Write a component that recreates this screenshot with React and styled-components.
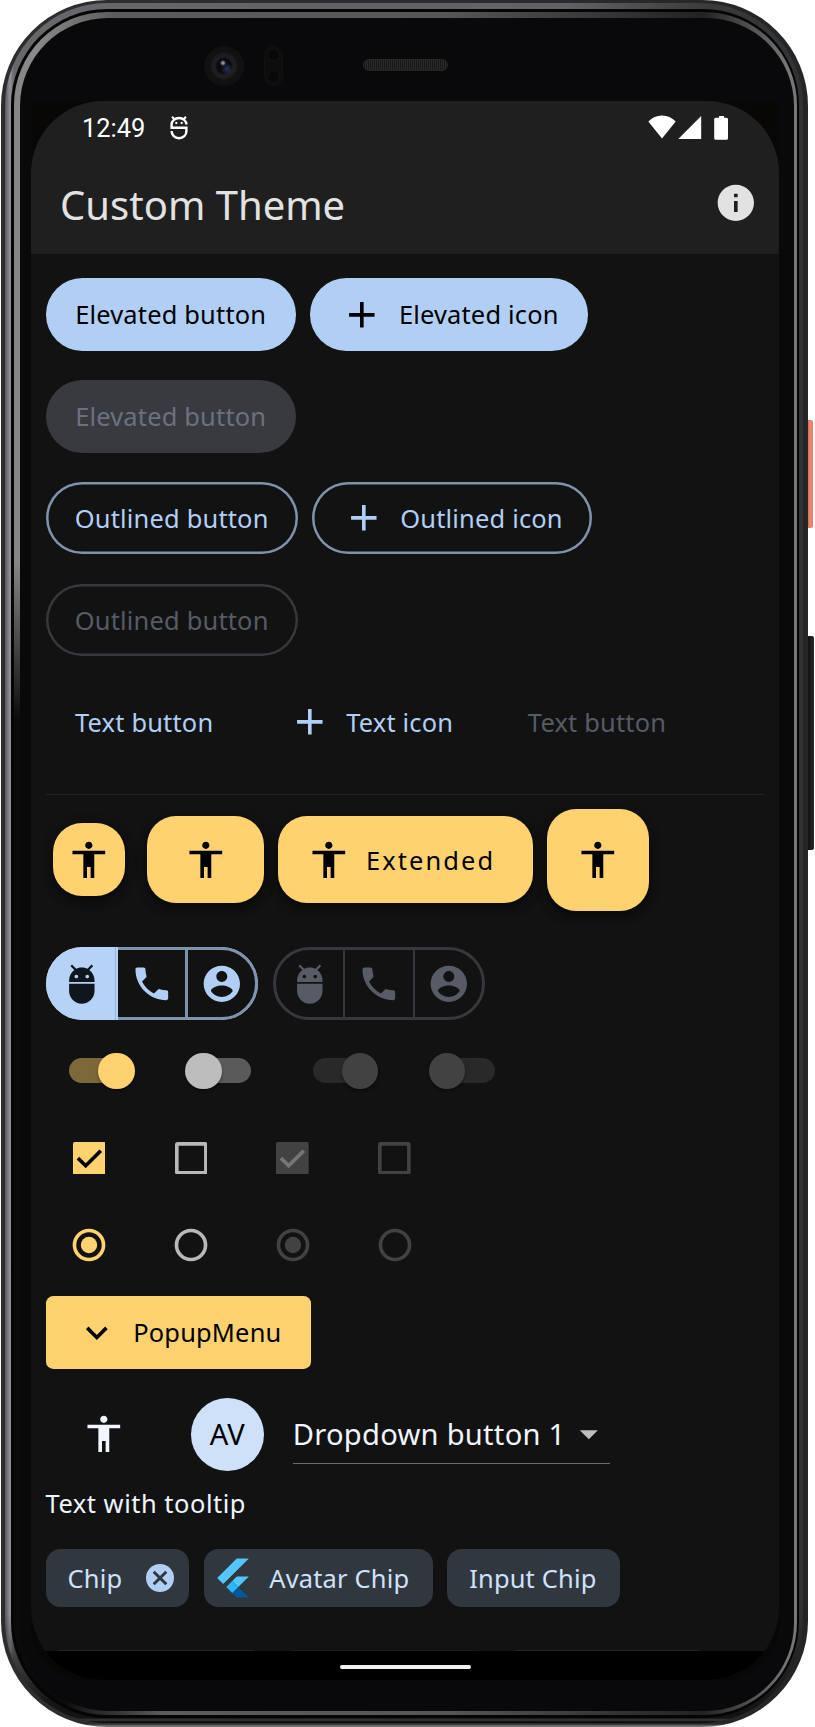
import React from "react";
import styled, { createGlobalStyle, css } from "styled-components";

const dp = (n) => `${(n * 1.8182).toFixed(2)}px`;

const color = {
  primary: "#b1cff5",
  primaryOutline: "#7f93ad",
  accent: "#ffd270",
  surface: "#121212",
  bar: "#1f1f1f",
  chip: "#30373f",
  chipText: "#d0e1fb",
  onSurface: "#f0f5fe",
  disabledFill: "#383a3f",
  disabledText: "#565b66",
  disabledLine: "#36383d",
};

const GlobalStyle = createGlobalStyle`
  *, *::before, *::after { box-sizing: border-box; }
  html, body { margin: 0; padding: 0; background: #ffffff; }
  body {
    font-family: "Noto Sans", sans-serif;
    overflow: hidden;
    font-kerning: normal;
  }
  button { font: inherit; border: 0; margin: 0; background: none; }
  svg { display: block; flex: none; }
`;

/* ---------- device shell ---------- */

const Page = styled.div`
  position: relative;
  width: 815px;
  height: 1727px;
  padding: 0 7px 0 1px;
  overflow: hidden;
`;

const SideKey = styled.span`
  position: absolute;
  left: 807px;
  width: ${(p) => p.$width}px;
  top: ${(p) => p.$top}px;
  height: ${(p) => p.$height}px;
  border-radius: 0 2px 2px 0;
  background: ${(p) => p.$fill};
`;

const Shell = styled.div`
  position: relative;
  height: 100%;
  padding: 3px 5px 4px 4px;
  border-radius: 106px;
  background:
    linear-gradient(180deg, transparent 1724px, #777 1726px),
    linear-gradient(90deg, #2c2e2e 0 50%, #232526);
`;

const MetalRim = styled.div`
  height: 100%;
  padding: 6px 4px 5px 6px;
  border-radius: 102px;
  background:
    linear-gradient(180deg, transparent 1610px, #151515 1700px, #131313 1715px, #3a3a3a 1717px, #0c0c0c 1719px),
    linear-gradient(90deg, #55575a 0, #929398 5px, #67686b 9px, #606367 40%, #606367 70%, #393b3d 88%, #303235 100%);
`;

const BlackRim = styled.div`
  height: 100%;
  padding: 3px 2px 3px 3px;
  border-radius: 96px;
  background: #050505;
`;

const InnerRim = styled.div`
  height: 100%;
  padding: 6px 3px 4px 6px;
  border-radius: 93px;
  background:
    linear-gradient(90deg, #0b0a0b 50px, transparent 150px) 0 100% / 200px 100px no-repeat,
    linear-gradient(180deg, transparent 550px, #0b0a0b 710px) 0 0 / 50px 100% no-repeat,
    linear-gradient(90deg, #858585 0, #8a8a8a 20px, #5c5c5c 100px, #565656 55%, #222 88%, #777 99%);
`;

const Glass = styled.div`
  position: relative;
  height: 100%;
  padding: 83px 15px 31px 11px;
  border-radius: 88px;
  background: #09090b;
`;

const ScreenWell = styled.div`
  height: 100%;
  border-radius: 0 0 56px 56px;
  background: #080705;
`;

const Camera = styled.span`
  position: absolute;
  left: 184px;
  top: 28px;
  width: 41px;
  height: 41px;
  border-radius: 50%;
  background:
    radial-gradient(circle at 19px 17px, #909094 0 1px, transparent 3px),
    radial-gradient(circle at 23px 23px, #27345a 0, transparent 6px),
    radial-gradient(circle at 20px 20px, #0a0b10 0 7px, #1d1e21 9px, #1d1d1d 12px, #111112 14px, #111112 19px, #0a0a0b 21px);
`;

const Sensor = styled.span`
  position: absolute;
  left: 244px;
  top: 28px;
  width: 19px;
  height: 40px;
  border-radius: 10px;
  border: 1px solid #111112;
  background:
    radial-gradient(circle at 50% 8px, #080808 0 5px, #121213 6px, transparent 7px),
    radial-gradient(circle at 50% 30px, #080808 0 5px, #121213 6px, transparent 7px),
    #0d0d0e;
`;

const Speaker = styled.span`
  position: absolute;
  left: 343px;
  top: 41px;
  width: 85px;
  height: 12px;
  border-radius: 6px;
  border: 1px solid #252525;
  background: repeating-linear-gradient(90deg, #171717 0 1px, #2a2a2a 1px 2px);
`;

/* ---------- screen ---------- */

const Screen = styled.main`
  height: 100%;
  display: flex;
  flex-direction: column;
  overflow: hidden;
  border-radius: 72px;
  background: ${color.surface};
`;

const Header = styled.header`
  flex: none;
  height: 153px;
  background: ${color.bar};
  color: #e2e2e2;
`;

const StatusBar = styled.div`
  display: flex;
  align-items: center;
  height: 53px;
  padding: 0 50px 0 51px;
  color: #fff;
  font: 400 25.4px/30px Roboto, sans-serif;
`;

const Clock = styled.span`
  width: 66px;
  margin-right: 22px;
`;

const StatusIcons = styled.div`
  display: flex;
  align-items: center;
  margin-left: auto;
`;

const AppBar = styled.div`
  display: flex;
  align-items: center;
  justify-content: space-between;
  height: 98px;
  padding: 0 ${dp(12)} 0 ${dp(16)};
`;

const Title = styled.h1`
  margin: 4px 0 0;
  font-size: 40px;
  line-height: 52px;
  font-weight: 400;
`;

const Content = styled.div`
  flex: 1;
  min-height: 0;
  overflow: hidden;
  display: flex;
  flex-direction: column;
  padding: 16.8px 14.5px 0 14.5px;
  font-size: 25.45px;
  line-height: 36px;
`;

const Row = styled.div`
  flex: none;
  display: flex;
  align-items: center;
  gap: ${dp(8)};
  height: ${(p) => dp(p.$h || 48)};
  margin-bottom: ${(p) => dp(p.$after || 0)};
`;

const variants = {
  elevated: css`
    background: ${color.primary};
    color: #000;
    &:disabled { background: ${color.disabledFill}; color: #6b7180; }
  `,
  outlined: css`
    box-shadow: inset 0 0 0 2.5px ${color.primaryOutline};
    color: ${color.primary};
    &:disabled {
      box-shadow: inset 0 0 0 2.5px ${color.disabledLine};
      color: ${color.disabledText};
    }
  `,
  text: css`
    color: ${color.primary};
    &:disabled { color: ${color.disabledText}; }
  `,
  popup: css`
    background: ${color.accent};
    color: #000;
    border-radius: ${dp(4)};
  `,
};

const Button = styled.button`
  flex: none;
  display: flex;
  align-items: center;
  justify-content: center;
  gap: 15px;
  width: ${(p) => p.$w}px;
  height: ${dp(40)};
  padding: 0;
  border-radius: ${dp(20)};
  white-space: nowrap;
  letter-spacing: 0.18px;
  ${(p) => variants[p.$variant]}
`;

const Divider = styled.hr`
  flex: none;
  width: 100%;
  height: 1px;
  margin: 28.6px 0 14px;
  border: 0;
  background: #222;
`;

const Fab = styled.button`
  flex: none;
  display: flex;
  align-items: center;
  justify-content: center;
  width: ${(p) => p.$w}px;
  height: ${(p) => dp(p.$h)};
  margin: 0 ${(p) => p.$inset || 0}px;
  padding: 0;
  border-radius: ${dp(16)};
  background: ${color.accent};
  color: #000;
  box-shadow: 0 6px 10px rgba(0, 0, 0, 0.35), 0 2px 14px rgba(0, 0, 0, 0.2);
`;

const ExtendedFab = styled(Fab)`
  justify-content: flex-start;
  gap: 15.3px;
  padding-left: 29px;
  letter-spacing: 2.1px;
`;

const ToggleGroup = styled.div`
  display: flex;
  width: 212.6px;
  height: ${dp(40)};
  overflow: hidden;
  border: 3px solid ${color.disabledLine};
  border-radius: ${dp(20)};
  color: ${(p) => (p.$disabled ? color.disabledText : color.primary)};
  ${(p) => !p.$disabled && css`
    border: 0;
    background: #b7d2f7;
  `}
`;

const ToggleCell = styled.span`
  flex: 1 1 0;
  display: flex;
  align-items: center;
  justify-content: center;
  & + & { border-left: 2px solid ${color.disabledLine}; }
`;

const ActiveCell = styled.span`
  flex: none;
  display: flex;
  align-items: center;
  justify-content: center;
  width: ${(p) => p.$w}px;
  color: ${(p) => (p.$on ? "#10161d" : color.primary)};
  background: ${(p) => (p.$on ? "#b7d2f7" : color.surface)};
  ${(p) => p.$on ? css`
    box-shadow: inset -2px 0 0 #b7d2f7, inset -3px 0 0 #9bb3d4;
  ` : css`
    border: 3px solid ${color.primaryOutline};
    border-left-width: ${p.$first ? 0 : 3}px;
    border-right-width: ${p.$last ? 3 : 0}px;
    border-radius: ${p.$last ? `0 ${dp(20)} ${dp(20)} 0` : 0};
  `}
`;

const SwitchBox = styled.span`
  display: flex;
  align-items: center;
  justify-content: center;
  width: ${dp(59)};
`;

const Track = styled.span`
  display: flex;
  align-items: center;
  justify-content: ${(p) => (p.$on ? "flex-end" : "flex-start")};
  width: ${dp(33)};
  height: ${dp(14)};
  border-radius: ${dp(7)};
  background: ${(p) => p.$track};
`;

const Thumb = styled.span`
  flex: none;
  width: ${dp(20)};
  height: ${dp(20)};
  margin: 0 -5.5px;
  border-radius: 50%;
  background: ${(p) => p.$fill};
  box-shadow: 0 2px 3px rgba(0, 0, 0, 0.35);
`;

const Cell = styled.span`
  display: flex;
  align-items: center;
  justify-content: center;
  width: ${(p) => dp(p.$w || 48)};
  color: ${color.onSurface};
`;

const Avatar = styled.span`
  display: flex;
  align-items: center;
  justify-content: center;
  width: ${dp(40)};
  height: ${dp(40)};
  margin: 0 ${dp(8)};
  border-radius: 50%;
  background: #cfe0f9;
  color: #000;
  font-size: 29.1px;
`;

const Dropdown = styled.div`
  display: flex;
  align-items: center;
  width: 317.5px;
  height: 59px;
  border-bottom: 1px solid #6c6c6c;
  color: ${color.onSurface};
  font-size: 29.1px;
  letter-spacing: 0.27px;
  white-space: nowrap;
  & > svg { margin-left: auto; color: #bdbdbd; }
`;

const TooltipText = styled.p`
  flex: none;
  height: ${dp(39)};
  margin: 0;
  padding-top: 7px;
  color: ${color.onSurface};
  letter-spacing: 0.53px;
`;

const Chip = styled.span`
  flex: none;
  display: flex;
  align-items: center;
  width: ${(p) => p.$w}px;
  height: ${dp(32)};
  padding-left: ${(p) => p.$pad ?? 22}px;
  border-radius: ${dp(8)};
  background: ${color.chip};
  color: ${color.chipText};
  letter-spacing: 0.18px;
  white-space: nowrap;
`;

const ChipDelete = styled.span`
  display: flex;
  margin-left: auto;
  margin-right: 15.4px;
`;

const ChipLogo = styled.span`
  display: flex;
  width: 52.6px;
`;

const PeekRow = styled.div`
  flex: none;
  display: flex;
  height: 1px;
  margin-top: auto;
  padding-left: 12px;
  gap: 37px;
`;

const PeekEdge = styled.span`
  width: ${(p) => p.$w}px;
  background: ${(p) => p.$fill};
`;

const NavBar = styled.footer`
  flex: none;
  display: flex;
  justify-content: center;
  height: 29px;
  padding-top: 14px;
  background: #000;
`;

const HomePill = styled.span`
  width: 131px;
  height: 4px;
  border-radius: 2px;
  background: #f2f2f2;
`;

/* ---------- icons ---------- */

const paths = {
  add: "M19 13h-6v6h-2v-6H5v-2h6V5h2v6h6v2z",
  person: "M12 2c1.1 0 2 .9 2 2s-.9 2-2 2-2-.9-2-2 .9-2 2-2zm9 7h-6v13h-2v-6h-2v6H9V9H3V7h18v2z",
  adb: "M5 16c0 3.87 3.13 7 7 7s7-3.13 7-7v-4H5v4zM16.12 4.37l2.1-2.1-.82-.83-2.3 2.31C14.16 3.28 13.12 3 12 3s-2.16.28-3.09.75L6.6 1.44l-.82.83 2.1 2.1C6.14 5.64 5 7.68 5 10v1h14v-1c0-2.32-1.14-4.36-2.88-5.63zM9 9c-.55 0-1-.45-1-1s.45-1 1-1 1 .45 1 1-.45 1-1 1zm6 0c-.55 0-1-.45-1-1s.45-1 1-1 1 .45 1 1-.45 1-1 1z",
  phone: "M6.62 10.79c1.44 2.83 3.76 5.14 6.59 6.59l2.2-2.2c.27-.27.67-.36 1.02-.24 1.12.37 2.33.57 3.57.57.55 0 1 .45 1 1V20c0 .55-.45 1-1 1-9.39 0-17-7.61-17-17 0-.55.45-1 1-1h3.5c.55 0 1 .45 1 1 0 1.25.2 2.45.57 3.57.11.35.03.74-.25 1.02l-2.2 2.2z",
  account: "M12 2C6.48 2 2 6.48 2 12s4.48 10 10 10 10-4.48 10-10S17.52 2 12 2zm0 3c1.66 0 3 1.34 3 3s-1.34 3-3 3-3-1.34-3-3 1.34-3 3-3zm0 14.2c-2.5 0-4.71-1.28-6-3.22.03-1.99 4-3.08 6-3.08 1.99 0 5.97 1.09 6 3.08-1.29 1.94-3.5 3.22-6 3.22z",
  info: "M12 2C6.48 2 2 6.48 2 12s4.48 10 10 10 10-4.48 10-10S17.52 2 12 2zm1 15h-2v-6h2v6zm0-8h-2V7h2v2z",
  expand: "M16.59 8.59L12 13.17 7.41 8.59 6 10l6 6 6-6z",
  drop: "M7 10l5 5 5-5z",
};

const Icon = ({ name, size = 43.64 }) => (
  <svg width={size} height={size} viewBox="0 0 24 24" fill="currentColor">
    <path d={paths[name]} />
  </svg>
);

const DebugIcon = () => (
  <svg width="18" height="24" viewBox="0 0 18 24" fill="none" stroke="#fff" strokeWidth="2.4">
    <path d="M2 .8l2.4 2.4M16 .8l-2.4 2.4" strokeWidth="2" />
    <path d="M16.4 8.6C16.4 4.6 13 2 9 2S1.6 4.6 1.6 8.6v3.2h14.8v3.4c0 4-3.2 7-7.4 7s-7.4-3-7.400-7.200" />
    <circle cx="6.3" cy="7" r="1.15" fill="#fff" stroke="none" />
    <circle cx="11.7" cy="7" r="1.15" fill="#fff" stroke="none" />
  </svg>
);

const SignalIcons = () => (
  <svg width="81" height="25" viewBox="0 0 81 25" fill="#fff">
    <path d="M.3 6.5C4 2.8 8.7 .6 14 .6s10 2.2 13.7 5.9L14 23.5z" />
    <path d="M53.2 1v23H30.3z" />
    <path d="M71 1h5v1.700h2.500q1.500 0 1.500 1.500v19q0 1.500-1.500 1.500h-10.800q-1.500 0-1.500-1.500v-19q0-1.500 1.500-1.500h3.300z" />
  </svg>
);

const CheckIcon = ({ on, fill, mark }) => (
  <svg width="32.7" height="32.7" viewBox="0 0 18 18" fill="none">
    {on ? (
      <>
        <rect width="18" height="18" rx="1" fill={fill} />
        <path d="M2.7 8.9l4.3 4.2 8.3-8.3" stroke={mark} strokeWidth="2" />
      </>
    ) : (
      <rect x="1" y="1" width="16" height="16" rx=".5" stroke={fill} strokeWidth="2" />
    )}
  </svg>
);

const RadioIcon = ({ on, fill }) => (
  <svg width="34" height="34" viewBox="0 0 18.7 18.7" fill="none">
    <circle cx="9.35" cy="9.35" r="8" stroke={fill} strokeWidth="2" />
    {on && <circle cx="9.35" cy="9.35" r="4.5" fill={fill} />}
  </svg>
);

const DeleteIcon = () => (
  <svg width="28" height="28" viewBox="2 2 20 20">
    <circle cx="12" cy="12" r="10" fill={color.primary} />
    <path d="M7.5 7.5l9 9M16.5 7.5l-9 9" stroke={color.chip} strokeWidth="2.1" />
  </svg>
);

const FlutterIcon = () => (
  <svg width="32" height="40" viewBox="9 10 148 182">
    <path fill="#54c5f8" d="M37.7 128.9L9.8 101 100.4 10.4h55.8M156.2 94h-55.8L79.5 114.9l27.9 27.9" />
    <path fill="#01579b" d="M79.5 170.7l20.900 20.900h55.800l-48.800-48.800" />
    <path fill="#29b6f6" d="M51.7 142.8l27.800-27.900 27.900 27.900-27.900 27.900z" />
  </svg>
);

/* ---------- controls ---------- */

const Switch = ({ on, track, thumb }) => (
  <SwitchBox>
    <Track $on={on} $track={track}>
      <Thumb $fill={thumb} />
    </Track>
  </SwitchBox>
);

const selectionStates = [
  { on: true, fill: color.accent, mark: "#000" },
  { on: false, fill: "#b8b8b8" },
  { on: true, fill: "#424242", mark: "#767676" },
  { on: false, fill: "#424242" },
];

const switchStates = [
  { on: true, track: "#7d683a", thumb: color.accent },
  { on: false, track: "#5a5a5a", thumb: "#bdbdbd" },
  { on: true, track: "#292929", thumb: "#424242" },
  { on: false, track: "#292929", thumb: "#424242" },
];

export default function App() {
  return (
    <>
      <GlobalStyle />
      <Page>
        <SideKey $top={420} $height={108} $width={6} $fill="linear-gradient(90deg, #c95f47, #ee8970 50%, #e97d65)" />
        <SideKey $top={636} $height={214} $width={7} $fill="linear-gradient(90deg, #0b0c0c, #2b2b29)" />
        <Shell>
          <MetalRim>
            <BlackRim>
              <InnerRim>
                <Glass>
                  <Camera />
                  <Sensor />
                  <Speaker />
                  <ScreenWell>
                    <Screen>
                      <Header>
                        <StatusBar>
                          <Clock>12:49</Clock>
                          <DebugIcon />
                          <StatusIcons>
                            <SignalIcons />
                          </StatusIcons>
                        </StatusBar>
                        <AppBar>
                          <Title>Custom Theme</Title>
                          <Icon name="info" />
                        </AppBar>
                      </Header>

                      <Content>
                        <Row $after={8}>
                          <Button $variant="elevated" $w={250.4}>Elevated button</Button>
                          <Button $variant="elevated" $w={278}><Icon name="add" />Elevated icon</Button>
                        </Row>
                        <Row $after={8}>
                          <Button $variant="elevated" $w={250.4} disabled>Elevated button</Button>
                        </Row>
                        <Row $after={8}>
                          <Button $variant="outlined" $w={252.4}>Outlined button</Button>
                          <Button $variant="outlined" $w={279.6}><Icon name="add" />Outlined icon</Button>
                        </Row>
                        <Row $after={8}>
                          <Button $variant="outlined" $w={252.4} disabled>Outlined button</Button>
                        </Row>
                        <Row>
                          <Button $variant="text" $w={197.4}>Text button</Button>
                          <Button $variant="text" $w={226}><Icon name="add" />Text icon</Button>
                          <Button $variant="text" $w={198} disabled>Text button</Button>
                        </Row>

                        <Divider />

                        <Row $h={56} $after={16}>
                          <Fab $w={72.7} $h={40} $inset={7.3}><Icon name="person" /></Fab>
                          <Fab $w={116.2} $h={48}><Icon name="person" /></Fab>
                          <ExtendedFab $w={254.6} $h={48}><Icon name="person" />Extended</ExtendedFab>
                          <Fab $w={101.8} $h={56}><Icon name="person" /></Fab>
                        </Row>

                        <Row>
                          <ToggleGroup>
                            <ActiveCell $on $w={72.3}><Icon name="adb" /></ActiveCell>
                            <ActiveCell $first $w={67.4}><Icon name="phone" /></ActiveCell>
                            <ActiveCell $last $w={72.9}><Icon name="account" /></ActiveCell>
                          </ToggleGroup>
                          <ToggleGroup $disabled>
                            <ToggleCell><Icon name="adb" /></ToggleCell>
                            <ToggleCell><Icon name="phone" /></ToggleCell>
                            <ToggleCell><Icon name="account" /></ToggleCell>
                          </ToggleGroup>
                        </Row>

                        <Row>
                          {switchStates.map((s, i) => <Switch key={i} {...s} />)}
                        </Row>
                        <Row>
                          {selectionStates.map((s, i) => <Cell key={i}><CheckIcon {...s} /></Cell>)}
                        </Row>
                        <Row>
                          {selectionStates.map((s, i) => <Cell key={i}><RadioIcon on={s.on} fill={s.fill} /></Cell>)}
                        </Row>
                        <Row $after={8}>
                          <Button $variant="popup" $w={265}><Icon name="expand" />PopupMenu</Button>
                        </Row>

                        <Row>
                          <Cell $w={64}><Icon name="person" /></Cell>
                          <Avatar>AV</Avatar>
                          <Dropdown>Dropdown button 1<Icon name="drop" /></Dropdown>
                        </Row>

                        <TooltipText>Text with tooltip</TooltipText>

                        <Row $h={32}>
                          <Chip $w={143.6}>
                            Chip
                            <ChipDelete><DeleteIcon /></ChipDelete>
                          </Chip>
                          <Chip $w={229} $pad={13}>
                            <ChipLogo><FlutterIcon /></ChipLogo>
                            Avatar Chip
                          </Chip>
                          <Chip $w={172.5}>Input Chip</Chip>
                        </Row>

                        <PeekRow>
                          <PeekEdge $w={196} $fill="#1f242a" />
                          <PeekEdge $w={187} $fill="#1b1b1b" />
                          <PeekEdge $w={184} $fill="#1f242a" />
                        </PeekRow>
                      </Content>

                      <NavBar>
                        <HomePill />
                      </NavBar>
                    </Screen>
                  </ScreenWell>
                </Glass>
              </InnerRim>
            </BlackRim>
          </MetalRim>
        </Shell>
      </Page>
    </>
  );
}
